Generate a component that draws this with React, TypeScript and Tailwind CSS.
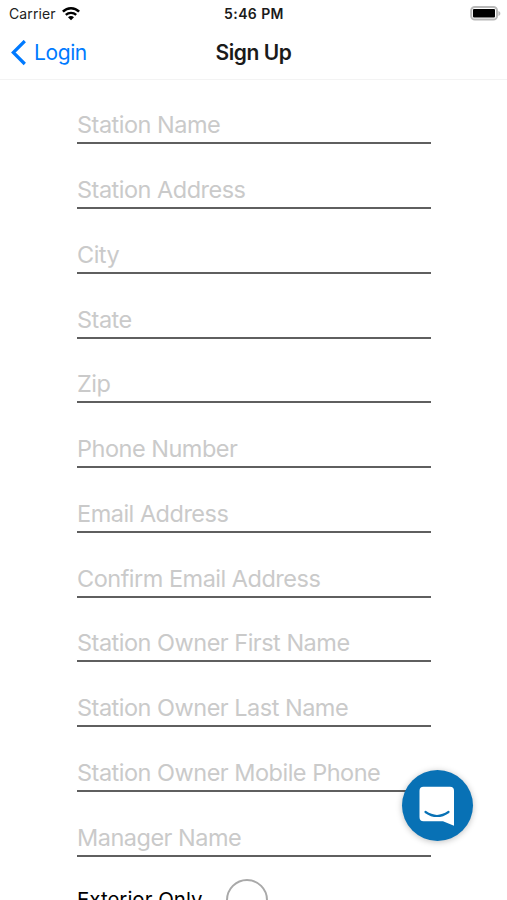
import React from "react";

const fields = [
    "Station Name",
    "Station Address",
    "City",
    "State",
    "Zip",
    "Phone Number",
    "Email Address",
    "Confirm Email Address",
    "Station Owner First Name",
    "Station Owner Last Name",
    "Station Owner Mobile Phone",
    "Manager Name",
];

export default function App() {
    return (
        <div className="relative h-[900px] w-[507px] overflow-hidden bg-white font-['Inter',sans-serif] text-black">
            <StatusBar />
            <NavBar />

            <form className="-mt-[0.5px] flex flex-col pl-[77px]">
                {fields.map((label) => (
                    <div key={label} className="flex h-[64.75px] w-[354px] flex-col justify-end">
                        <span className="whitespace-nowrap pb-[1px] text-[23.5px] leading-[32px] tracking-[-0.5px] text-[#cacaca]">
                            {label}
                        </span>
                        <span className="h-[2px] shrink-0 bg-[#5f5f5f]" />
                    </div>
                ))}
                <div className="flex pt-[22.5px]">
                    <span className="w-[149px] whitespace-nowrap pt-[5px] text-[20.5px] leading-[32px]">Exterior Only</span>
                    <span className="h-[42px] w-[42px] rounded-full border-2 border-[#a9a9a9]" />
                </div>
            </form>

            <ChatButton />
        </div>
    );
}

function StatusBar() {
    return (
        <div className="flex h-[27px] items-center">
            <div className="flex w-[169px] items-center gap-[6px] pl-[9px]">
                <span className="text-[14px] leading-[20px] tracking-[0.1px] text-[#222]">Carrier</span>
                <svg className="h-[14px] w-[18px]" viewBox="0 0 18 14" fill="none">
                    <path d="M0.9 4.7C5.4 0.1 12.6 0.1 17.1 4.7" stroke="#000" strokeWidth="2.5" />
                    <path d="M3.8 7.9C6.7 5.1 11.3 5.1 14.2 7.9" stroke="#000" strokeWidth="2.3" />
                    <path d="M9 13.2L6 10.2C7.7 8.7 10.3 8.7 12 10.2Z" fill="#000" />
                </svg>
            </div>
            <div className="w-[170px] text-center text-[14px] font-semibold leading-[20px] tracking-[0.4px] text-[#1a1a1a]">5:46 PM</div>
            <div className="flex flex-1 justify-end pr-[6px]">
                <svg className="h-[15px] w-[31px]" viewBox="0 0 31 15">
                    <rect x="1.2" y="1" width="25.8" height="12.6" rx="3.6" fill="#fff" stroke="#b8b8b8" strokeWidth="2" />
                    <rect x="3" y="3" width="22" height="8.6" rx="1" fill="#000" />
                    <path d="M28.4 5C31 6 31 9 28.4 10Z" fill="#b8b8b8" />
                </svg>
            </div>
        </div>
    );
}

function NavBar() {
    return (
        <div className="flex h-[53px] items-center border-b border-[#f3f3f3]">
            <button className="flex w-[169px] items-center gap-[8px] pl-[11px] text-[#007aff]">
                <svg className="h-[26px] w-[15px]" viewBox="0 0 15 26" fill="none">
                    <path d="M13.8 1L2.3 12.5L13.8 24" stroke="#007aff" strokeWidth="3.2" />
                </svg>
                <span className="text-[21px] leading-[28px] tracking-[-0.4px]">Login</span>
            </button>
            <h1 className="w-[169px] text-center text-[21px] font-semibold leading-[28px] tracking-[-0.45px] text-[#1a1a1a]">Sign Up</h1>
        </div>
    );
}

// Floating messenger launcher, stays above the form
function ChatButton() {
    return (
        <button className="absolute left-[402px] top-[770px] flex h-[71px] w-[71px] items-center justify-center rounded-full bg-[#0871b5] shadow-[0_1px_6px_rgba(0,0,0,0.25)]">
            <svg className="h-[71px] w-[71px]" viewBox="0 0 71 71">
                <path d="M21.5 16.7H48Q52 16.7 52 20.7V55.7L41 51.2H21.5Q17.5 51.2 17.5 47.2V20.7Q17.5 16.7 21.5 16.7Z" fill="#fff" />
                <path d="M23.5 42Q35 50 46.5 42" fill="none" stroke="#0871b5" strokeWidth="2.2" strokeLinecap="round" />
            </svg>
        </button>
    );
}
